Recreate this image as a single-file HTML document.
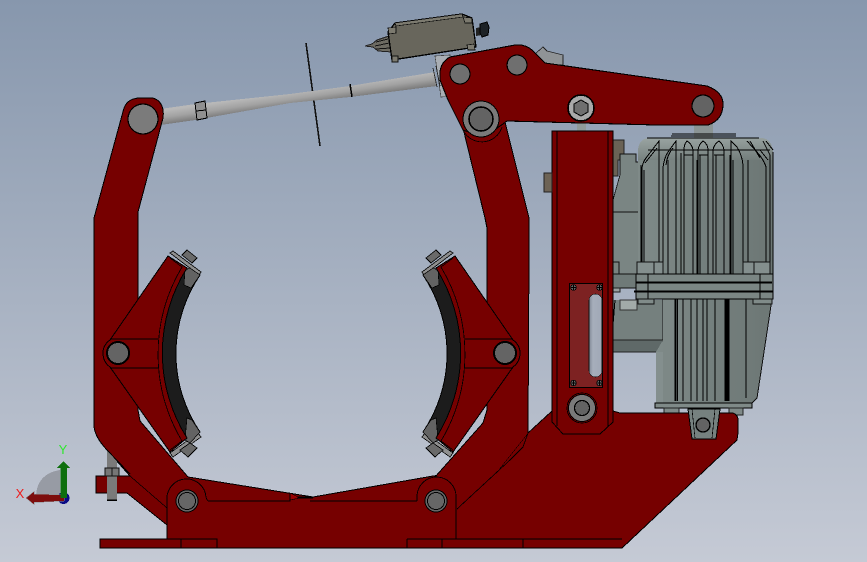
<!DOCTYPE html>
<html><head><meta charset="utf-8"><title>CAD view</title>
<style>
html,body{margin:0;padding:0;width:867px;height:562px;overflow:hidden;background:#a8b2c1}
svg{display:block}
text{font-family:"Liberation Sans",sans-serif}
</style></head><body>
<svg width="867" height="562" viewBox="0 0 867 562" xmlns="http://www.w3.org/2000/svg" shape-rendering="crispEdges">
<defs>
<linearGradient id="bg" x1="0" y1="0" x2="0" y2="1"><stop offset="0" stop-color="#8797ad"/><stop offset="1" stop-color="#c5cad5"/></linearGradient>
<linearGradient id="rod" gradientUnits="userSpaceOnUse" x1="299" y1="91" x2="301" y2="105"><stop offset="0" stop-color="#b8b8b8"/><stop offset=".5" stop-color="#a2a2a2"/><stop offset="1" stop-color="#7a7a7a"/></linearGradient>
<linearGradient id="mot" x1="0" y1="0" x2="1" y2="0"><stop offset="0" stop-color="#7f8a88"/><stop offset=".5" stop-color="#747f7d"/><stop offset="1" stop-color="#6d7775"/></linearGradient>
<linearGradient id="slot" x1="0" y1="0" x2="1" y2="0"><stop offset="0" stop-color="#7f8794"/><stop offset=".3" stop-color="#a6aebb"/><stop offset="1" stop-color="#a0a8b6"/></linearGradient>
<linearGradient id="cap" x1="0" y1="0" x2="0" y2="1"><stop offset="0" stop-color="#a3adab"/><stop offset="1" stop-color="#757f7d"/></linearGradient>
<g id="shoe" stroke="#000" stroke-linejoin="round">
<!-- plate and nut -->
<path d="M170,253 L173,251 L201,272 L199,275 Z" fill="#8f8f8f" stroke-width=".8"/>
<path d="M182,255 L187,250 L197,258 L192,263 Z" fill="#6a6a6a" stroke-width=".8"/>
<path d="M170,453 L173,457 L201,437 L198,433 Z" fill="#8f8f8f" stroke-width=".8"/>
<path d="M180,450 L188,457 L197,448 L190,443 Z" fill="#6a6a6a" stroke-width=".8"/>
<!-- pad -->
<path d="M186,268 L200,275 A140,140 0 0 0 200,432 L186,440 A159,159 0 0 1 186,268 Z" fill="#1c1c1c" stroke-width="1"/>
<path d="M185,270 L190,268 L200,275 L191,288 L184,285 Z" fill="#636363" stroke-width=".7"/>
<path d="M185,440 L187,418 L192,420 L200,432 L190,443 Z" fill="#636363" stroke-width=".7"/>
<!-- body -->
<path d="M103,353 Q103,345 110,340 L168,256 L187,268 A159,159 0 0 0 187,438 L170,452 L110,367 Q103,362 103,353 Z" fill="#760000" stroke-width="1"/>
<path d="M170,258 L182,267 A170,170 0 0 0 182,441 L170,450" fill="none" stroke-width=".8"/>
<path d="M110,339 H158 M110,368 H158" fill="none" stroke-width=".8"/>
<circle cx="118" cy="353" r="11" fill="#646464" stroke-width="2"/>
</g>
</defs>
<rect width="867" height="562" fill="url(#bg)"/>

<!-- disc line -->
<path d="M306,43 L320,146" stroke="#111" stroke-width="1.6" fill="none"/>

<!-- rod -->
<path d="M160,109 L195,104 L290,94 L350,86 L435,72 L437,86 L350,97 L290,103 L195,120 L160,125 Z" fill="url(#rod)"/>
<path d="M350,84 L352,97" stroke="#000" stroke-width="1.5"/>
<path d="M195,103 L205,101 L207,118 L197,120 Z" fill="#909090" stroke="#000"/>
<path d="M196,111 L206,110" stroke="#000"/>

<!-- switch -->
<path d="M435,56 L450,55 L455,96 L441,97 Z" fill="#a9aeb4" stroke="#444" stroke-width=".7"/>
<path d="M433,68 L437,87 M436,66 L440,86" stroke="#222" stroke-width=".8"/>
<path d="M365,46 L372,44 L377,40 L389,36 L392,52 L378,51 L373,47 Z" fill="#6d6b62" stroke="#222"/>
<path d="M376,42 L388,39 M375,46 L389,43 M376,49 L390,48" stroke="#111"/>
<path d="M476,28 L481,27 L481,35 L476,36 Z" fill="#222"/>
<path d="M480,24 L487,22 L489,27 L488,35 L482,37 L480,33 Z" fill="#1d2226" stroke="#000"/>
<path d="M395,23 L462,14 L472,18 L476,47 L392,60 L388,32 Z" fill="#68665c" stroke="#000" stroke-width="1.3"/>
<path d="M395,23 L462,14 L463,17 L396,26 Z" fill="#7c7a6f" stroke="#111" stroke-width=".7"/>
<path d="M388,28 L396,27 L396,33 L389,34 Z M463,17 L472,18 L472,23 L465,23 Z M392,56 L398,56 L398,62 L392,62 Z M467,45 L474,44 L475,50 L468,50 Z" fill="#7c7a6f" stroke="#111" stroke-width=".8"/>

<!-- rod behind lever right -->
<path d="M535,54 L543,47 L547,51 L563,55 L563,65 L548,65 L540,62 Z" fill="#8f9396" stroke="#222" stroke-width=".8"/>

<!-- motor background pieces -->
<path d="M613,140 H624 V160 H618 V176 H613 Z" fill="#6a6255" stroke="#222" stroke-width=".7"/>
<path d="M620,160 V154 H636 V162 H640 V212 H613 V200 L620,175 Z" fill="#7a8583" stroke="#111" stroke-width=".8"/>
<rect x="613" y="212" width="30" height="64" fill="#7a8583" stroke="#111" stroke-width=".7"/>
<rect x="613" y="262" width="6" height="12" fill="#79837f" stroke="#111" stroke-width=".7"/>
<rect x="613" y="274" width="24" height="14" fill="#6f7a78" stroke="#111" stroke-width=".7"/>
<rect x="613" y="288" width="7" height="4" fill="#98a0a0" stroke="#222" stroke-width=".6"/>
<path d="M613,300 H665 V340 H613 Z" fill="#75807e"/>
<rect x="620" y="300" width="17" height="10" fill="#a2aaa8" stroke="#333" stroke-width=".6"/>
<path d="M615,300 L613,325" stroke="#000" stroke-width="1"/>
<path d="M613,340 H663 L658,352 H613 Z" fill="#5f6968" stroke="#222" stroke-width=".7"/>

<!-- motor shaft -->
<rect x="694" y="118" width="19" height="20" fill="#8b9494"/>
<rect x="577" y="120" width="9" height="12" fill="#8f9999"/>

<!-- motor lower -->
<path d="M656,352 L663,340 V299 H772 L757,398 L752,403 H656 Z" fill="url(#mot)"/>
<rect x="656" y="352" width="7" height="51" fill="#848f8e"/>
<path d="M663,299 V340 M772,299 L757,398 L752,403" stroke="#111" stroke-width="1" fill="none"/>
<rect x="663" y="299" width="12" height="104" fill="#7d8886"/>
<g stroke="#000" fill="none">
<path d="M675,299 V401 M677.5,299 V401 M683,299 V401 M691,299 V401 M697,299 V401 M703,299 V401 M707,299 V401 M715,299 V401 M725,299 V401 M727,299 V401 M729,299 V401" stroke-width="1"/>
<path d="M676,299 V401 M726,299 V401 M728,299 V401" stroke-width="1.2"/>
<path d="M746,299 V398" stroke-width=".7"/>
</g>
<path d="M655,403 H752 V408 H655 Z" fill="#7f8a88" stroke="#000" stroke-width=".9"/>
<path d="M664,408 H679 V415 H664 Z M729,408 H743 V415 H729 Z" fill="#7f8a88" stroke="#222" stroke-width=".7"/>

<!-- base -->
<path d="M100,539 H167 V525 L127,493 H96 V476 H130 L107,450 L188,477 L313,497 L433,476 L500,468 L528,433 L552,411 H613 L620,413 H733 Q738,415 738,420 V433 L737,440 L622,548 H100 Z" fill="#760000" stroke="#000" stroke-width="1"/>
<path d="M313,497 H291 L290,501 H208 M417,501 H310" fill="none" stroke="#000" stroke-width="1"/>
<path d="M290,493 L300,498 L290,500 Z" fill="#900" stroke="#000" stroke-width=".6"/>
<path d="M297,498 L313,498" stroke="#000" stroke-width="1.4"/>
<path d="M100,539 H217 V548 M181,539 V548 M407,539 H622 M407,539 V548 M442,539 V548 M523,539 V548" fill="none" stroke="#000" stroke-width=".9"/>

<!-- bracket bolt -->
<rect x="107" y="446" width="10" height="54" fill="#7a7a7a"/>
<path d="M105,468 H119 V476 H105 Z M112,468 V476" fill="#767676" stroke="#111" stroke-width=".8"/>
<path d="M107,500 H117" stroke="#000" stroke-width="1.5"/>

<!-- left arm -->
<path d="M94,218 L124,108 Q128,98 140,98 L153,98 Q165,102 163,118 L138,212 V410 L140,421 L188,477 L167,508 L130,474 L107,450 Q94,436 94,425 Z" fill="#760000"/>
<path d="M188,477 L140,421 L138,410 V212 L163,118 Q165,102 153,98 L140,98 Q128,98 124,108 L94,218 V425 Q94,436 107,450 L130,474" fill="none" stroke="#000" stroke-width="1"/>
<circle cx="143" cy="119" r="15" fill="#7b7b7b" stroke="#000" stroke-width="1.2"/>

<!-- right arm -->
<path d="M463,128 L485,218 L487,228 V410 L483,423 L435,477 L457,509 L500,468 L528,433 L529,250 V218 L505,122 Z" fill="#760000"/>
<path d="M463,128 L485,218 L487,228 V410 L483,423 L435,477 M528,433 L529,250 V218 L505,122" fill="none" stroke="#000" stroke-width="1"/>

<!-- pivot lines and bolts over arms -->
<path d="M167,539 V500 A19.5,19.5 0 0 1 206,497 Q207,501 209,501 M417,501 Q417,497 417,496 A19.5,19.5 0 0 1 456,497 V539" fill="none" stroke="#000" stroke-width=".9"/>
<path d="M130,476 L167,508" stroke="#000" stroke-width=".7"/>
<path d="M457,509 L510,460 L523,447 L528,433" fill="none" stroke="#000" stroke-width=".8"/>
<g stroke="#000"><circle cx="187" cy="501" r="11" fill="#666" stroke-width="1"/><circle cx="187" cy="501" r="8.5" fill="#666" stroke-width="1"/>
<circle cx="436" cy="501" r="11" fill="#666" stroke-width="1"/><circle cx="436" cy="501" r="8.5" fill="#666" stroke-width="1"/></g>

<!-- lever -->
<path d="M440,72 Q441,62 450,57 L515,45 Q525,44 532,50 L545,63 L707,86 Q723,92 723,104 Q723,120 708,125 L657,125 L507,121 L503,124 L484,137 L463,130 L448,100 L440,80 Z" fill="#760000" stroke="#000" stroke-width="1.1"/>
<circle cx="460" cy="74" r="10" fill="#6f6f6f" stroke="#000" stroke-width="1.2"/>
<circle cx="517" cy="65" r="10" fill="#6f6f6f" stroke="#000" stroke-width="1.2"/>
<circle cx="703" cy="106" r="11" fill="#636363" stroke="#000" stroke-width="1.2"/>
<path d="M463,130 A21,21 0 0 0 502,127" fill="none" stroke="#000" stroke-width=".8"/>
<circle cx="481" cy="119" r="18" fill="#7a7a7a" stroke="#000" stroke-width="1"/>
<circle cx="481" cy="119" r="12" fill="#636363" stroke="#000" stroke-width="1.6"/>
<circle cx="581" cy="108" r="13" fill="#a9a9a9" stroke="#000" stroke-width="1.6"/>
<path d="M581,100 L588,104 V112 L581,116 L574,112 V104 Z" fill="#6f6f6f" stroke="#000" stroke-width="1"/>

<!-- shoes -->
<use href="#shoe"/>
<use href="#shoe" transform="translate(623,0) scale(-1,1)"/>

<!-- motor upper -->
<path d="M638,150 Q639,138 650,138 H762 Q772,139 773,152 V274 H638 Z" fill="url(#mot)"/>
<path d="M638,150 Q639,138 650,138 H762 Q772,139 773,152 V160 H638 Z" fill="url(#cap)" opacity=".75"/>
<path d="M647,138 H759 M672,134 H736 M671,136 H736" stroke="#000" stroke-width=".8" fill="none"/>
<g fill="none" stroke="#000" stroke-width="1">
<path d="M642,262 V170 Q642,163 646,158 L659,141 V262 M644,262 V170 M657,148 L645,163"/>
<path d="M663,262 V168 Q664,158 668,152 L676,141 V274 M668,274 V160 M673,148 Q667,155 666,165"/>
<path d="M684,274 V150 Q684,144 687,141 Q692,144 693,150 V274 M681,274 V153 M697,274 V160"/>
<path d="M698,274 V150 Q699,144 703,141 Q708,144 708,150 V274 M700,274 V155 M713,274 V155"/>
<path d="M713,274 V150 Q714,144 719,141 Q723,144 724,150 V274 M716,274 V155 M730,274 V155"/>
<path d="M731,274 V141 L737,147 Q742,155 743,165 V274 M733,160 V274 M748,262 V160"/>
<path d="M747,141 L757,152 Q764,160 766,167 V262 M750,141 L760,158 M770,262 V165"/>
<path d="M763,141 L770,155 V180 M766,141 L773,150 M760,150 L768,160"/>
<path d="M773,152 V274 M641,165 V262"/>
<path d="M648,150 H770 M684,155 H693 M699,155 H708 M714,155 H724"/>
</g>
<rect x="637" y="262" width="26" height="12" fill="#848f8e" stroke="#111" stroke-width=".8"/>
<rect x="743" y="262" width="27" height="12" fill="#848f8e" stroke="#111" stroke-width=".8"/>
<path d="M654,262 V274 M754,262 V274" stroke="#111" stroke-width=".7"/>

<!-- flange -->
<rect x="636" y="274" width="137" height="25" fill="#7b8684" stroke="#000" stroke-width=".9"/>
<path d="M636,282 H772 M636,283 H772 M634,291 H773 M634,292 H773 M648,274 V299 M760,274 V299" stroke="#000" stroke-width=".9"/>
<rect x="638" y="299" width="16" height="5" fill="#808b89" stroke="#111" stroke-width=".7"/>
<rect x="753" y="299" width="19" height="5" fill="#808b89" stroke="#111" stroke-width=".7"/>

<!-- motor foot lug -->
<path d="M688,409 H720 L716,439 H692 Z" fill="#76817f" stroke="#000" stroke-width="1"/>
<path d="M692,409 L695,438 M715,409 L712,438" stroke="#000" stroke-width=".7"/>
<circle cx="703" cy="425" r="7" fill="#636363" stroke="#000" stroke-width="1.4"/>

<!-- column -->
<path d="M552,131 H613 V422 L600,434 H563 L552,422 Z" fill="#760000" stroke="#000" stroke-width="1"/>
<path d="M557,131 V426 M608,131 V426" stroke="#000" stroke-width=".8" fill="none"/>
<rect x="544" y="173" width="8" height="19" fill="#6d6355" stroke="#222" stroke-width=".7"/>
<rect x="569.5" y="283.5" width="33" height="104" fill="#7d2222" stroke="#000" stroke-width="1"/>
<rect x="589" y="294" width="13" height="83" rx="6.5" fill="url(#slot)" stroke="#111" stroke-width=".6"/>
<g fill="#666" stroke="#000" stroke-width=".8">
<circle cx="573.5" cy="287.5" r="2.8"/><circle cx="599.5" cy="287.5" r="2.8"/><circle cx="573.5" cy="383" r="2.8"/><circle cx="599.5" cy="383" r="2.8"/>
</g>
<path d="M571,287.5 H576 M573.5,285 V290 M597,287.5 H602 M599.5,285 V290 M571,383 H576 M573.5,380.5 V385.5 M597,383 H602 M599.5,380.5 V385.5" stroke="#000" stroke-width=".7"/>
<circle cx="582" cy="408" r="15" fill="#760000" stroke="#000" stroke-width=".8"/>
<circle cx="582" cy="408" r="13.5" fill="#7a7a7a" stroke="#000" stroke-width="1"/>
<circle cx="582" cy="408" r="7.5" fill="#636363" stroke="#000" stroke-width="1.3"/>

<!-- axis triad -->
<path d="M36,498 Q36,474 60,470 V498 Z" fill="#979ba4"/>
<circle cx="63.5" cy="498" r="6" fill="#0b0b85"/>
<path d="M64,495 V501 L34,502.5 V504.5 L26,498 L34,491.5 V494 Z" fill="#7d0d0d" stroke="#8d8d90" stroke-width=".5"/>
<rect x="60.5" y="468" width="6.5" height="30" fill="#0e6f0e"/>
<path d="M57,468 L63.5,461 L70,468 Z" fill="#0e6f0e"/>
<text x="63" y="454" font-size="13" fill="#2ee82e" text-anchor="middle">Y</text>
<text x="20" y="498" font-size="13" fill="#ee1c1c" text-anchor="middle">X</text>
</svg>
</body></html>
